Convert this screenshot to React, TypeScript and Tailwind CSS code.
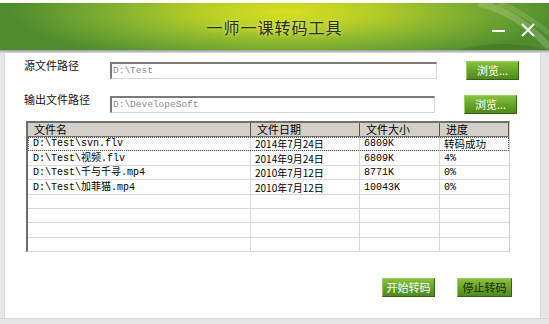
const rows = [
  { name: 'D:\\Test\\svn.flv', date: '2014年7月24日', size: '6809K', progress: '转码成功' },
  { name: 'D:\\Test\\视频.flv', date: '2014年9月24日', size: '6809K', progress: '4%' },
  { name: 'D:\\Test\\千与千寻.mp4', date: '2010年7月12日', size: '8771K', progress: '0%' },
  { name: 'D:\\Test\\加菲猫.mp4', date: '2010年7月12日', size: '10043K', progress: '0%' },
  { name: '', date: '', size: '', progress: '' },
  { name: '', date: '', size: '', progress: '' },
  { name: '', date: '', size: '', progress: '' },
  { name: '', date: '', size: '', progress: '' },
]

const mono = "font-['Liberation_Mono','Noto_Sans_CJK_SC',monospace]"
const cjk = "font-['Noto_Sans_CJK_SC','Liberation_Sans',sans-serif]"

function GreenButton({ label, dark }: { label: string; dark?: boolean }) {
  return (
    <button
      className={`h-[19px] flex items-center justify-center bg-gradient-to-b from-[#86c03e] via-[#68a526] to-[#4f8a18] border border-[#9ad060] border-r-[#3a5f18] border-b-[#3a5f18] text-[11px] leading-none ${cjk} ${
        dark ? 'text-[#1c2a08] w-[55px]' : 'text-white w-[53px]'
      }`}
    >
      {label}
    </button>
  )
}

function PathRow({ label, value, inputW }: { label: string; value: string; inputW: string }) {
  return (
    <div className="flex items-center">
      <span className={`w-[86px] text-[11px] text-[#111] ${cjk} -mt-[10px]`}>{label}</span>
      <div
        className={`${inputW} h-[17px] bg-white border-t-2 border-l-2 border-[#7a7a7a] border-r border-b border-r-[#d6d6d6] border-b-[#d6d6d6] flex items-center pl-[1px] text-[9.5px] text-[#8a8a8a] ${mono}`}
      >
        {value}
      </div>
      <div className="ml-[29px]">
        <GreenButton label="浏览..." />
      </div>
    </div>
  )
}

export default function App() {
  return (
    <div className="w-[549px] h-[324px] bg-[#e6e6e6] flex flex-col overflow-hidden">
      <div className="h-[3px] bg-white" />
      {/* title bar */}
      <div className="relative h-[47px] bg-[radial-gradient(ellipse_50%_115%_at_52%_18%,#d8e020_0%,#b6cd26_32%,#80b030_64%,#4e8c2e_100%)] flex items-center justify-center">
        <svg className="absolute right-0 top-0" width="90" height="47" viewBox="0 0 90 47">
          <path d="M20 0 C45 6 70 22 90 44" stroke="rgba(255,255,255,0.18)" strokeWidth="7" fill="none" />
          <path d="M40 0 C62 8 80 22 90 30" stroke="rgba(255,255,255,0.12)" strokeWidth="5" fill="none" />
          <path d="M0 47 C30 38 60 40 90 47" fill="rgba(0,40,0,0.12)" />
        </svg>
        <span className={`text-[16px] text-[#26321a] tracking-[1px] ${cjk} [text-shadow:0_0_4px_rgba(255,255,160,0.8)]`}>
          一师一课转码工具
        </span>
        <div className="absolute right-[44px] top-[27px] w-[13px] h-[2px] bg-white" />
        <svg className="absolute right-[14px] top-[20px]" width="14" height="14" viewBox="0 0 14 14">
          <path d="M1 1 L13 13 M13 1 L1 13" stroke="white" strokeWidth="1.8" />
        </svg>
      </div>
      <div className="h-[3px] bg-gradient-to-b from-[#9a9a9a] to-[#e0e0e0]" />
      {/* body */}
      <div className="flex-1 flex">
        <div className="w-[5px] bg-[#e6e6e6] border-r border-[#d8d8d8]" />
        <div className="w-[535px] bg-white flex flex-col pl-[19px] pt-[8px]">
          <PathRow label="源文件路径" value="D:\Test" inputW="w-[327px]" />
          <div className="mt-[15px]">
            <PathRow label="输出文件路径" value="D:\DevelopeSoft" inputW="w-[325px]" />
          </div>
          {/* table */}
          <div className="mt-[7px] ml-[2px] w-[484px] h-[131px] border-t-2 border-l-2 border-[#6e6e6e] border-r border-b border-r-[#d0d0d0] border-b-[#d0d0d0] bg-white">
            <div className={`grid grid-cols-[223px_109px_80px_1fr] h-[14px] bg-[#d4d0c8] border-b border-[#6e6e6e] text-[11px] text-black leading-[13px] ${cjk}`}>
              {['文件名', '文件日期', '文件大小', '进度'].map((h) => (
                <div key={h} className="pl-[6px] border-r border-[#555] whitespace-nowrap">
                  {h}
                </div>
              ))}
            </div>
            {rows.map((r, i) => (
              <div
                key={i}
                className={`grid grid-cols-[223px_109px_80px_1fr] h-[14.4px] border-b border-[#d8d8d8] text-[10px] leading-[13px] text-black items-end ${
                  i === 0 ? 'outline-1 outline-dotted outline-[#555] -outline-offset-1' : ''
                }`}
              >
                <div className={`pl-[5px] h-full flex items-end border-r border-[#d8d8d8] whitespace-nowrap ${mono}`}>{r.name}</div>
                <div className={`pl-[4px] h-full flex items-end border-r border-[#d8d8d8] text-[10px] whitespace-nowrap ${cjk}`}>{r.date}</div>
                <div className={`pl-[4px] h-full flex items-end border-r border-[#d8d8d8] ${mono}`}>{r.size}</div>
                <div className={`pl-[4px] h-full flex items-end whitespace-nowrap ${r.progress.length > 3 ? `text-[10.5px] ${cjk}` : mono}`}>{r.progress}</div>
              </div>
            ))}
          </div>
          <div className="flex justify-end gap-[22px] pr-[28px] mt-[26px]">
            <GreenButton label="开始转码" />
            <GreenButton label="停止转码" dark />
          </div>
        </div>
        <div className="flex-1 bg-[#e6e6e6] border-l border-[#d8d8d8]" />
      </div>
      <div className="h-[6px] bg-[#e6e6e6] border-t border-[#d8d8d8]" />
    </div>
  )
}
